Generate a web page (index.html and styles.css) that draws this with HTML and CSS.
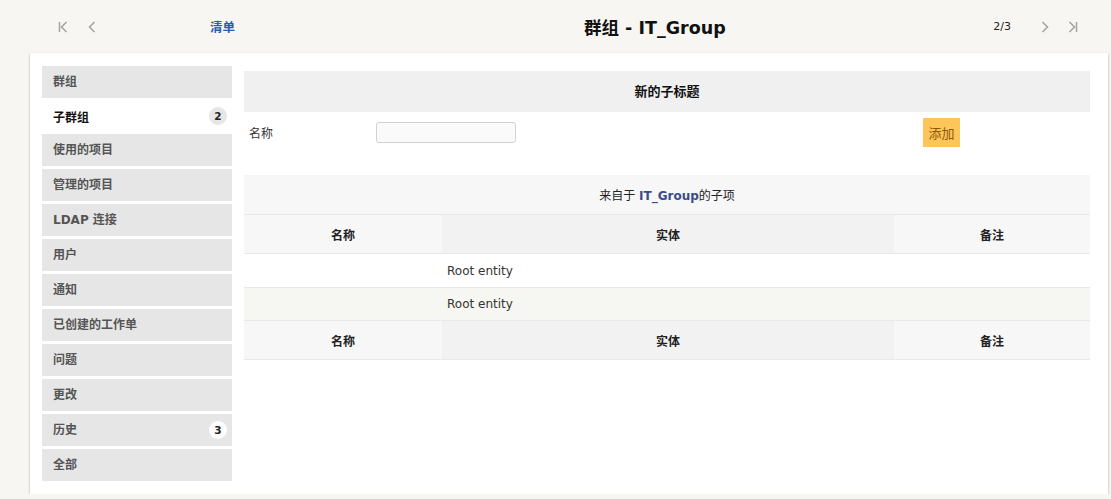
FILE: index.html
```html
<!DOCTYPE html>
<html>
	<head>
		<meta charset="utf-8">
		<title>群组 - IT_Group</title>
		<link rel="stylesheet" href="styles.css">
	</head>
	<body>
		<div class="topbar">
			<a class="nav-btn first" href="#"><svg width="12" height="12" viewBox="0 0 12 12"><path d="M1.5 1v10M8.5 1L3.5 6l5 5"/></svg></a>
			<a class="nav-btn prev" href="#"><svg width="12" height="12" viewBox="0 0 12 12"><path d="M7.5 1L2.5 6l5 5"/></svg></a>
			<a class="list-link" href="#">清单</a>
			<h1 class="title">群组 - IT_Group</h1>
			<div class="spacer"></div>
			<span class="counter">2/3</span>
			<a class="nav-btn next" href="#"><svg width="12" height="12" viewBox="0 0 12 12"><path d="M1.5 1l5 5-5 5"/></svg></a>
			<a class="nav-btn last" href="#"><svg width="12" height="12" viewBox="0 0 12 12"><path d="M1.5 1l5 5-5 5M8.5 1v10"/></svg></a>
		</div>

		<div class="card">
			<ul class="tabs">
				<li class="tab"><span class="tab-label">群组</span></li>
				<li class="tab active"><span class="tab-label">子群组</span> <span class="badge">2</span></li>
				<li class="tab"><span class="tab-label">使用的项目</span></li>
				<li class="tab"><span class="tab-label">管理的项目</span></li>
				<li class="tab"><span class="tab-label">LDAP 连接</span></li>
				<li class="tab"><span class="tab-label">用户</span></li>
				<li class="tab"><span class="tab-label">通知</span></li>
				<li class="tab"><span class="tab-label">已创建的工作单</span></li>
				<li class="tab"><span class="tab-label">问题</span></li>
				<li class="tab"><span class="tab-label">更改</span></li>
				<li class="tab"><span class="tab-label">历史</span> <span class="badge light">3</span></li>
				<li class="tab"><span class="tab-label">全部</span></li>
			</ul>

			<div class="main">
				<div class="subtitle">新的子标题</div>
				<div class="add-form">
					<label class="field-label">名称</label>
					<input class="field-input" type="text">
					<button class="add-btn">添加</button>
				</div>

				<table class="grid">
					<tr class="caption-row">
						<th colspan="3">来自于 <a class="group-link" href="#">IT_Group</a>的子项</th>
					</tr>
					<tr class="head-row">
						<th class="col-name">名称</th>
						<th class="col-entity">实体</th>
						<th class="col-comment">备注</th>
					</tr>
					<tr class="data-row">
						<td></td>
						<td>Root entity</td>
						<td></td>
					</tr>
					<tr class="data-row odd">
						<td></td>
						<td>Root entity</td>
						<td></td>
					</tr>
					<tr class="head-row">
						<th class="col-name">名称</th>
						<th class="col-entity">实体</th>
						<th class="col-comment">备注</th>
					</tr>
				</table>
			</div>
		</div>
	</body>
</html>
```

FILE: styles.css
```css
html, body {padding: 0; margin: 0; border: 0;}
body {background-color: #f7f6f3; font-family: "DejaVu Sans", "Noto Sans CJK SC", sans-serif; font-size: 12px; color: #333;}
a {text-decoration: none;}

/* top bar */
.topbar {display: flex; align-items: center; height: 53px; padding: 0 30px 0 57px; box-sizing: border-box;}
.nav-btn {display: flex; align-items: center; justify-content: center; width: 14px; height: 14px;}
.nav-btn svg {fill: none; stroke: #a3a3a3; stroke-width: 1.5;}
.nav-btn.prev {margin-left: 15px;}
.nav-btn.last {margin-left: 13px;}
.list-link {margin-left: 110px; color: #2d5aa6; font-size: 12.5px; font-weight: bold;}
.title {margin: 0 0 0 349px; font-size: 17.5px; font-weight: bold; color: #111;}
.spacer {flex: 1;}
.counter {margin-right: 29px; font-size: 11px; color: #222;}

/* card */
.card {display: flex; gap: 12px; width: 1078px; margin-left: 30px; padding: 13px 18px 13px 12px; box-sizing: border-box; background-color: #fff; box-shadow: 0 1px 2px rgba(0, 0, 0, 0.35);}

.tabs {width: 190px; margin: 0; padding: 0; list-style: none; display: flex; flex-direction: column;}
.tab {display: flex; align-items: center; justify-content: space-between; height: 32px; margin-bottom: 3px; padding: 0 5px 0 11px; box-sizing: border-box; background-color: #e6e6e6; color: #555; font-weight: bold; font-size: 12px;}
.tab:last-child {margin-bottom: 0;}
.tab-label {margin-bottom: 3px;}
.tab.active {height: 36px; margin-top: -3px; margin-bottom: 0; background-color: #fff; color: #111;}
.tab.active .tab-label {margin-bottom: 0;}
.badge {display: flex; align-items: center; justify-content: center; width: 18px; height: 18px; border-radius: 50%; background-color: #e6e6e6; color: #222; font-size: 10.5px; font-weight: bold;}
.badge.light {background-color: #fff;}

.main {flex: 1; padding-top: 5px;}
.subtitle {height: 41px; line-height: 41px; text-align: center; background-color: #f0f0f0; color: #111; font-weight: bold; font-size: 13px;}

.add-form {display: grid; grid-template-columns: 132px 547px auto; align-items: center; height: 41px; margin-bottom: 22px;}
.field-label {padding-left: 5px; font-size: 12px; color: #333;}
.field-input {width: 140px; height: 21px; box-sizing: border-box; border: 1px solid #d2d2d2; border-radius: 3px; background-color: #fafafa;}
.add-btn {width: 37px; height: 29px; padding: 0; border: 0; background-color: #fec55b; color: #8c5a00; font-family: inherit; font-size: 13px;}

.grid {width: 100%; border-collapse: collapse;}
.grid th, .grid td {padding: 0; border-bottom: 1px solid #e8e8e8;}
.caption-row th {height: 39px; background-color: #f7f7f7; font-weight: normal; color: #222;}
.group-link {color: #3b4c8c; font-weight: bold;}
.head-row th {height: 38px; color: #222; font-weight: bold;}
.col-name {width: 198px; background-color: #f7f7f7;}
.col-entity {width: 452px; background-color: #f2f2f2;}
.col-comment {background-color: #f7f7f7;}
.data-row td {height: 33px;}
.data-row td:nth-child(2) {padding-left: 5px;}
.data-row.odd td {height: 32px; background-color: #f6f6f2;}
```
